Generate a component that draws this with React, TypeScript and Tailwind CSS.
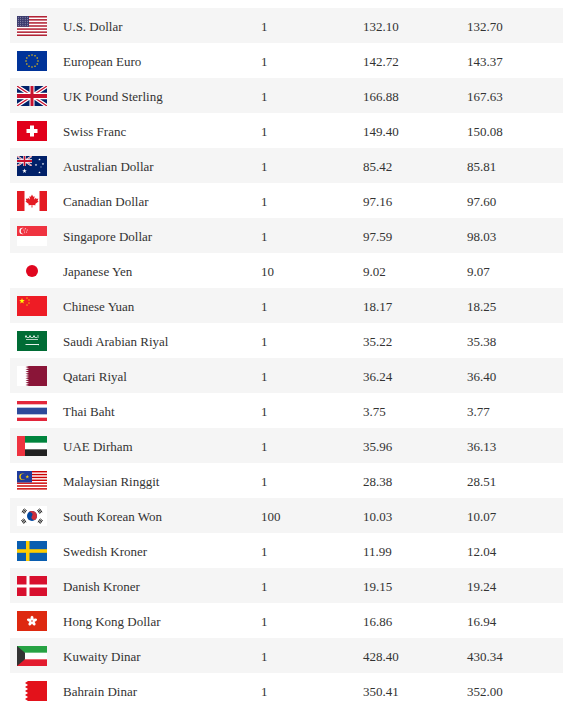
import type { ReactNode } from "react";

const Jack = ({ w = 30, h = 20 }: { w?: number; h?: number }) => (
  <svg x={0} y={0} width={w} height={h} viewBox="0 0 60 30" preserveAspectRatio="none">
    <rect width="60" height="30" fill="#012169" />
    <path d="M0,0 L60,30 M60,0 L0,30" stroke="#fff" strokeWidth="6" />
    <path d="M0,0 L60,30 M60,0 L0,30" stroke="#C8102E" strokeWidth="2" />
    <path d="M30,0 v30 M0,15 h60" stroke="#fff" strokeWidth="10" />
    <path d="M30,0 v30 M0,15 h60" stroke="#C8102E" strokeWidth="6" />
  </svg>
);

const Star = ({ cx, cy, r, fill }: { cx: number; cy: number; r: number; fill: string }) => {
  const pts: string[] = [];
  for (let i = 0; i < 10; i++) {
    const a = -Math.PI / 2 + (i * Math.PI) / 5;
    const rr = i % 2 === 0 ? r : r * 0.4;
    pts.push(`${cx + rr * Math.cos(a)},${cy + rr * Math.sin(a)}`);
  }
  return <polygon points={pts.join(" ")} fill={fill} />;
};

const Flag = ({ children }: { children: ReactNode }) => (
  <svg width="30" height="20" viewBox="0 0 30 20" className="block">
    {children}
  </svg>
);

const us = (
  <Flag>
    <rect width="30" height="20" fill="#b22234" />
    {[1, 3, 5, 7, 9, 11].map((i) => (
      <rect key={i} y={(i * 20) / 13} width="30" height={20 / 13} fill="#fff" />
    ))}
    <rect width="12" height={(7 * 20) / 13} fill="#3c3b6e" />
    {[0, 1, 2, 3, 4].map((r) =>
      [0, 1, 2, 3, 4].map((c) => (
        <circle key={`${r}-${c}`} cx={1.3 + c * 2.3} cy={1.2 + r * 2} r="0.45" fill="#fff" opacity="0.8" />
      ))
    )}
  </Flag>
);

const eu = (
  <Flag>
    <rect width="30" height="20" fill="#003399" />
    {Array.from({ length: 12 }).map((_, i) => {
      const a = (i * Math.PI) / 6;
      return <circle key={i} cx={15 + 6 * Math.cos(a)} cy={10 + 6 * Math.sin(a)} r="0.75" fill="#ffcc00" />;
    })}
  </Flag>
);

const uk = (
  <Flag>
    <Jack />
  </Flag>
);

const ch = (
  <Flag>
    <rect width="30" height="20" fill="#e1001b" />
    <rect x="13" y="4.5" width="4" height="11" fill="#fff" />
    <rect x="9.5" y="8" width="11" height="4" fill="#fff" />
  </Flag>
);

const au = (
  <Flag>
    <rect width="30" height="20" fill="#012169" />
    <Jack w={15} h={10} />
    <Star cx={7.5} cy={15} r={2.4} fill="#fff" />
    <Star cx={22.5} cy={16.5} r={1.3} fill="#fff" />
    <Star cx={19} cy={9} r={1.3} fill="#fff" />
    <Star cx={22.5} cy={3.5} r={1.3} fill="#fff" />
    <Star cx={26} cy={8} r={1.3} fill="#fff" />
    <Star cx={24} cy={11} r={0.8} fill="#fff" />
  </Flag>
);

const ca = (
  <Flag>
    <rect width="30" height="20" fill="#fff" />
    <rect width="7.5" height="20" fill="#e41b23" />
    <rect x="22.5" width="7.5" height="20" fill="#e41b23" />
    <path
      d="M15 3.5 L16.2 5.8 L17.6 5.2 L17.1 8.6 L19 6.8 L19.5 8 L21.3 7.6 L20.6 9.9 L21.6 10.4 L18.2 13.1 L18.6 14.3 L15.4 13.9 L15.5 16.5 L14.5 16.5 L14.6 13.9 L11.4 14.3 L11.8 13.1 L8.4 10.4 L9.4 9.9 L8.7 7.6 L10.5 8 L11 6.8 L12.9 8.6 L12.4 5.2 L13.8 5.8 Z"
      fill="#e41b23"
    />
  </Flag>
);

const sg = (
  <Flag>
    <rect width="30" height="20" fill="#fff" />
    <rect width="30" height="10" fill="#ef3340" />
    <circle cx="5.6" cy="5" r="3.2" fill="#fff" />
    <circle cx="6.8" cy="5" r="3" fill="#ef3340" />
    <circle cx="8.6" cy="2.8" r="0.55" fill="#fff" />
    <circle cx="10.2" cy="4" r="0.55" fill="#fff" />
    <circle cx="9.6" cy="6" r="0.55" fill="#fff" />
    <circle cx="7.6" cy="6" r="0.55" fill="#fff" />
    <circle cx="7" cy="4" r="0.55" fill="#fff" />
  </Flag>
);

const jp = (
  <Flag>
    <rect width="30" height="20" fill="#fff" />
    <circle cx="15" cy="10" r="6" fill="#e0061f" />
  </Flag>
);

const cn = (
  <Flag>
    <rect width="30" height="20" fill="#ee1c25" />
    <Star cx={5} cy={5} r={3} fill="#ffff00" />
    <Star cx={10} cy={2} r={1} fill="#ffff00" />
    <Star cx={12} cy={4} r={1} fill="#ffff00" />
    <Star cx={12} cy={7} r={1} fill="#ffff00" />
    <Star cx={10} cy={9} r={1} fill="#ffff00" />
  </Flag>
);

const sa = (
  <Flag>
    <rect width="30" height="20" fill="#006c35" />
    <path
      d="M8 6 q1 -2 2 0 q1 2 2 0 q1 -2 2 0 q1 2 2 0 q1 -2 2 0 q1 2 2 0 M9 8.5 h12 M9 4 v3 M13 4 v3 M17 4 v3 M21 4 v3"
      stroke="#fff"
      strokeWidth="0.8"
      fill="none"
      opacity="0.9"
    />
    <path d="M8.5 13.5 h13" stroke="#fff" strokeWidth="0.9" />
    <path d="M21.5 13 v1.2" stroke="#fff" strokeWidth="0.9" />
  </Flag>
);

const serrated = (x0: number, x1: number, n: number) => {
  const step = 20 / n;
  let d = `M30 0 L${x0} 0`;
  for (let i = 0; i < n; i++) {
    d += ` L${x1} ${i * step + step / 2} L${x0} ${(i + 1) * step}`;
  }
  return d + " L30 20 Z";
};

const qa = (
  <Flag>
    <rect width="30" height="20" fill="#fff" />
    <path d={serrated(12, 8.5, 9)} fill="#8a1538" />
  </Flag>
);

const th = (
  <Flag>
    <rect width="30" height="20" fill="#e2263b" />
    <rect y="3.33" width="30" height="13.34" fill="#fff" />
    <rect y="6.67" width="30" height="6.66" fill="#2d4a9b" />
  </Flag>
);

const ae = (
  <Flag>
    <rect width="30" height="20" fill="#fff" />
    <rect width="30" height="6.67" fill="#00843d" />
    <rect y="13.33" width="30" height="6.67" fill="#222" />
    <rect width="8" height="20" fill="#ef3340" />
  </Flag>
);

const my = (
  <Flag>
    <rect width="30" height="20" fill="#fff" />
    {[0, 2, 4, 6, 8, 10, 12].map((i) => (
      <rect key={i} y={(i * 20) / 14} width="30" height={20 / 14} fill="#cc0001" />
    ))}
    <rect width="15" height={(8 * 20) / 14} fill="#1f3c9b" />
    <circle cx="5.6" cy="5.7" r="3.3" fill="#ffcc00" />
    <circle cx="6.6" cy="5.7" r="2.9" fill="#1f3c9b" />
    <Star cx={10.3} cy={5.8} r={2} fill="#ffcc00" />
  </Flag>
);

const kr = (
  <Flag>
    <rect width="30" height="20" fill="#fff" />
    <circle cx="15" cy="10" r="5" fill="#0047a0" />
    <path d="M10 10 A5 5 0 0 1 20 10 A2.5 2.5 0 0 1 15 10 A2.5 2.5 0 0 0 10 10 Z" fill="#cd2e3a" transform="rotate(33 15 10)" />
    <g stroke="#222" strokeWidth="0.9">
      <g transform="rotate(-56 7 5)">
        <path d="M4.8 4 h4.4 M4.8 5.3 h4.4 M4.8 6.6 h4.4" />
      </g>
      <g transform="rotate(56 23 5)">
        <path d="M20.8 4 h4.4 M20.8 5.3 h4.4 M20.8 6.6 h4.4" />
      </g>
      <g transform="rotate(56 7 15)">
        <path d="M4.8 14 h4.4 M4.8 15.3 h4.4 M4.8 16.6 h4.4" />
      </g>
      <g transform="rotate(-56 23 15)">
        <path d="M20.8 14 h4.4 M20.8 15.3 h4.4 M20.8 16.6 h4.4" />
      </g>
    </g>
  </Flag>
);

const se = (
  <Flag>
    <rect width="30" height="20" fill="#0a5eb0" />
    <rect x="9" width="3.5" height="20" fill="#fecc00" />
    <rect y="8.2" width="30" height="3.6" fill="#fecc00" />
  </Flag>
);

const dk = (
  <Flag>
    <rect width="30" height="20" fill="#d8102e" />
    <rect x="9.5" width="3" height="20" fill="#fff" />
    <rect y="8.5" width="30" height="3" fill="#fff" />
  </Flag>
);

const hk = (
  <Flag>
    <rect width="30" height="20" fill="#de2910" />
    {[0, 72, 144, 216, 288].map((a) => (
      <ellipse key={a} cx="15" cy="7.4" rx="1.6" ry="2.7" fill="#fff" transform={`rotate(${a} 15 10)`} />
    ))}
    <circle cx="15" cy="10" r="0.8" fill="#de2910" />
  </Flag>
);

const kw = (
  <Flag>
    <rect width="30" height="20" fill="#fff" />
    <rect width="30" height="6.67" fill="#26a243" />
    <rect y="13.33" width="30" height="6.67" fill="#e31c2f" />
    <polygon points="0,0 8,6.67 8,13.33 0,20" fill="#333" />
  </Flag>
);

const bh = (
  <Flag>
    <rect width="30" height="20" fill="#fff" />
    <path d={serrated(11, 8, 5)} fill="#e3121b" />
  </Flag>
);

const rows: [ReactNode, string, string, string, string][] = [
  [us, "U.S. Dollar", "1", "132.10", "132.70"],
  [eu, "European Euro", "1", "142.72", "143.37"],
  [uk, "UK Pound Sterling", "1", "166.88", "167.63"],
  [ch, "Swiss Franc", "1", "149.40", "150.08"],
  [au, "Australian Dollar", "1", "85.42", "85.81"],
  [ca, "Canadian Dollar", "1", "97.16", "97.60"],
  [sg, "Singapore Dollar", "1", "97.59", "98.03"],
  [jp, "Japanese Yen", "10", "9.02", "9.07"],
  [cn, "Chinese Yuan", "1", "18.17", "18.25"],
  [sa, "Saudi Arabian Riyal", "1", "35.22", "35.38"],
  [qa, "Qatari Riyal", "1", "36.24", "36.40"],
  [th, "Thai Baht", "1", "3.75", "3.77"],
  [ae, "UAE Dirham", "1", "35.96", "36.13"],
  [my, "Malaysian Ringgit", "1", "28.38", "28.51"],
  [kr, "South Korean Won", "100", "10.03", "10.07"],
  [se, "Swedish Kroner", "1", "11.99", "12.04"],
  [dk, "Danish Kroner", "1", "19.15", "19.24"],
  [hk, "Hong Kong Dollar", "1", "16.86", "16.94"],
  [kw, "Kuwaity Dinar", "1", "428.40", "430.34"],
  [bh, "Bahrain Dinar", "1", "350.41", "352.00"],
];

export default function App() {
  return (
    <div className="bg-white w-[576px] h-[720px] pt-[8px] pl-[10px] text-[13px] text-[#333] font-['Liberation_Serif',serif]">
      <div className="w-[553px] flex flex-col">
        {rows.map(([flag, name, unit, buy, sell], i) => (
          <div
            key={name}
            className={`grid grid-cols-[45px_198px_102px_104px_104px] items-center h-[35px] ${
              i % 2 === 0 ? "bg-[#f5f5f5]" : "bg-white"
            }`}
          >
            <div className="pl-[7px]">{flag}</div>
            <div className="pl-[8px] pt-[2px]">{name}</div>
            <div className="pl-[8px] pt-[2px]">{unit}</div>
            <div className="pl-[8px] pt-[2px]">{buy}</div>
            <div className="pl-[8px] pt-[2px]">{sell}</div>
          </div>
        ))}
      </div>
    </div>
  );
}
